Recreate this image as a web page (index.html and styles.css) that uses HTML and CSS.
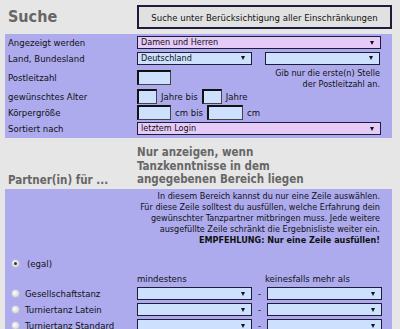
FILE: index.html
```html
<!DOCTYPE html>
<html lang="de">
<head>
<meta charset="utf-8">
<title>Suche</title>
<link rel="stylesheet" href="styles.css">
</head>
<body>
<div class="page">
  <div class="header">
    <h1 class="title">Suche</h1>
    <div class="btn">Suche unter Berücksichtigung aller Einschränkungen</div>
  </div>

  <div class="panel panel-top">
    <div class="row r1">
      <div class="label">Angezeigt werden</div>
      <div class="ctrl"><div class="sel pink wide"><span>Damen und Herren</span><i class="arr"></i></div></div>
    </div>
    <div class="row r2">
      <div class="label">Land, Bundesland</div>
      <div class="ctrl pair">
        <div class="sel blue half"><span>Deutschland</span><i class="arr"></i></div>
        <div class="sel blue half"><span></span><i class="arr"></i></div>
      </div>
    </div>
    <div class="row r3">
      <div class="label">Postleitzahl</div>
      <div class="ctrl plz">
        <div class="inp w34"></div>
        <div class="hint">Gib nur die erste(n) Stelle<br>der Postleitzahl an.</div>
      </div>
    </div>
    <div class="row r4">
      <div class="label">gewünschtes Alter</div>
      <div class="ctrl inl">
        <div class="inp w20"></div><span class="unit">Jahre bis</span><div class="inp w20"></div><span class="unit">Jahre</span>
      </div>
    </div>
    <div class="row r5">
      <div class="label">Körpergröße</div>
      <div class="ctrl inl">
        <div class="inp w34"></div><span class="unit">cm bis</span><div class="inp w36"></div><span class="unit">cm</span>
      </div>
    </div>
    <div class="row r6">
      <div class="label">Sortiert nach</div>
      <div class="ctrl"><div class="sel pink wide"><span>letztem Login</span><i class="arr"></i></div></div>
    </div>
  </div>

  <div class="sec-head">
    <div class="sec-left">Partner(in) für ...</div>
    <div class="sec-right">Nur anzeigen, wenn<br>Tanzkenntnisse in dem<br>angegebenen Bereich liegen</div>
  </div>

  <div class="panel panel-bottom">
    <p class="info">In diesem Bereich kannst du nur eine Zeile auswählen.<br>Für diese Zeile solltest du ausfüllen, welche Erfahrung dein<br>gewünschter Tanzpartner mitbringen muss. Jede weitere<br>ausgefüllte Zeile schränkt die Ergebnisliste weiter ein.<br><b>EMPFEHLUNG: Nur eine Zeile ausfüllen!</b></p>
    <div class="radio-row egal"><span class="radio on"></span><span>(egal)</span></div>
    <div class="cols">
      <div class="label"></div>
      <div class="ctrl pair"><span class="colh">mindestens</span><span class="colh">keinesfalls mehr als</span></div>
    </div>
    <div class="row dr">
      <div class="label radio-row"><span class="radio"></span><span>Gesellschaftstanz</span></div>
      <div class="ctrl pair"><div class="sel blue half"><span></span><i class="arr"></i></div><span class="dash">-</span><div class="sel blue half"><span></span><i class="arr"></i></div></div>
    </div>
    <div class="row dr">
      <div class="label radio-row"><span class="radio"></span><span>Turniertanz Latein</span></div>
      <div class="ctrl pair"><div class="sel blue half"><span></span><i class="arr"></i></div><span class="dash">-</span><div class="sel blue half"><span></span><i class="arr"></i></div></div>
    </div>
    <div class="row dr">
      <div class="label radio-row"><span class="radio"></span><span>Turniertanz Standard</span></div>
      <div class="ctrl pair"><div class="sel blue half"><span></span><i class="arr"></i></div><span class="dash">-</span><div class="sel blue half"><span></span><i class="arr"></i></div></div>
    </div>
  </div>
</div>
</body>
</html>
```

FILE: styles.css
```css
html, body {
  margin: 0;
  padding: 0;
  background: #e6e6e6;
}
body {
  font-family: "DejaVu Sans Condensed", "DejaVu Sans", sans-serif;
  font-size: 9.5px;
  color: #111;
  overflow: hidden;
}
.page {
  width: 400px;
}
.header {
  display: flex;
  align-items: flex-start;
  padding: 5px 8px 0 8px;
  height: 29px;
  box-sizing: border-box;
}
.title {
  margin: 0;
  width: 129px;
  font-size: 16px;
  font-weight: bold;
  color: #666;
  line-height: 22px;
  padding-top: 1px;
}
.btn {
  width: 251px;
  height: 20px;
  border: 2px solid #1c1c3c;
  background: #e1e1e1;
  display: flex;
  align-items: center;
  justify-content: center;
  font-size: 9.5px;
  color: #111;
}
.panel {
  margin: 0 8px 0 5px;
  background: #adabee;
  padding: 0 12px 0 3px;
}
.panel-top {
  margin-top: 5px;
  padding-top: 1px;
  padding-bottom: 1px;
}
.row {
  display: flex;
  align-items: center;
}
.label {
  width: 129px;
  flex: none;
}
.ctrl {
  flex: 1;
  display: flex;
  align-items: center;
}
.r1 { height: 15px; }
.r2 { height: 16px; }
.r3 { height: 22px; }
.r4 { height: 16px; }
.r5 { height: 16px; }
.r6 { height: 17px; }
.sel {
  position: relative;
  height: 11px;
  border: 1px solid #1d1d3a;
  display: flex;
  align-items: center;
  padding-left: 3px;
  font-size: 9px;
  box-sizing: content-box;
}
.sel span {
  flex: 1;
  line-height: 11px;
}
.arr {
  width: 0;
  height: 0;
  border-left: 2.5px solid transparent;
  border-right: 2.5px solid transparent;
  border-top: 4px solid #111;
  margin-right: 6px;
}
.pink { background: #e6cbf8; }
.blue { background: #cde0fd; }
.wide { width: 239px; }
.half { width: 110px; }
.pair {
  justify-content: space-between;
}
.inp {
  height: 12px;
  background: #cde0fd;
  border-top: 2px solid #111;
  border-left: 2px solid #111;
  border-right: 1px solid #444;
  border-bottom: 1px solid #444;
}
.w20 { width: 17px; }
.w34 { width: 31px; }
.w36 { width: 33px; }
.plz {
  justify-content: space-between;
  align-items: center;
}
.hint {
  text-align: right;
  line-height: 11px;
  font-size: 9px;
  margin-top: 4px;
}
.inl .unit {
  margin: 0 4px;
}
.sec-head {
  display: flex;
  align-items: flex-end;
  padding: 8px 8px 2px 8px;
  color: #666;
  font-weight: bold;
}
.sec-left {
  width: 129px;
  font-size: 11.5px;
  line-height: 14px;
}
.sec-right {
  font-size: 11.5px;
  line-height: 13.5px;
}
.panel-bottom {
  padding-top: 2px;
  padding-bottom: 20px;
}
.info {
  margin: 0;
  text-align: right;
  font-size: 9px;
  line-height: 11px;
}
.radio-row {
  display: flex;
  align-items: center;
}
.radio {
  width: 7px;
  height: 7px;
  border-radius: 50%;
  background: radial-gradient(circle at 40% 40%, #fafafa, #cfcfcf);
  border: 1px solid #bdbdd8;
  margin: 0 5px 0 3px;
  position: relative;
  flex: none;
}
.radio.on::after {
  content: "";
  position: absolute;
  left: 2px;
  top: 2px;
  width: 3px;
  height: 3px;
  border-radius: 50%;
  background: #333;
}
.egal {
  margin-top: 11px;
  height: 14px;
}
.egal span:last-child { margin-left: 2px; }
.cols {
  display: flex;
  height: 15px;
  align-items: center;
}
.colh {
  width: 115px;
}
.dr { height: 16px; }
.dash {
  width: 15px;
  text-align: center;
}
```
